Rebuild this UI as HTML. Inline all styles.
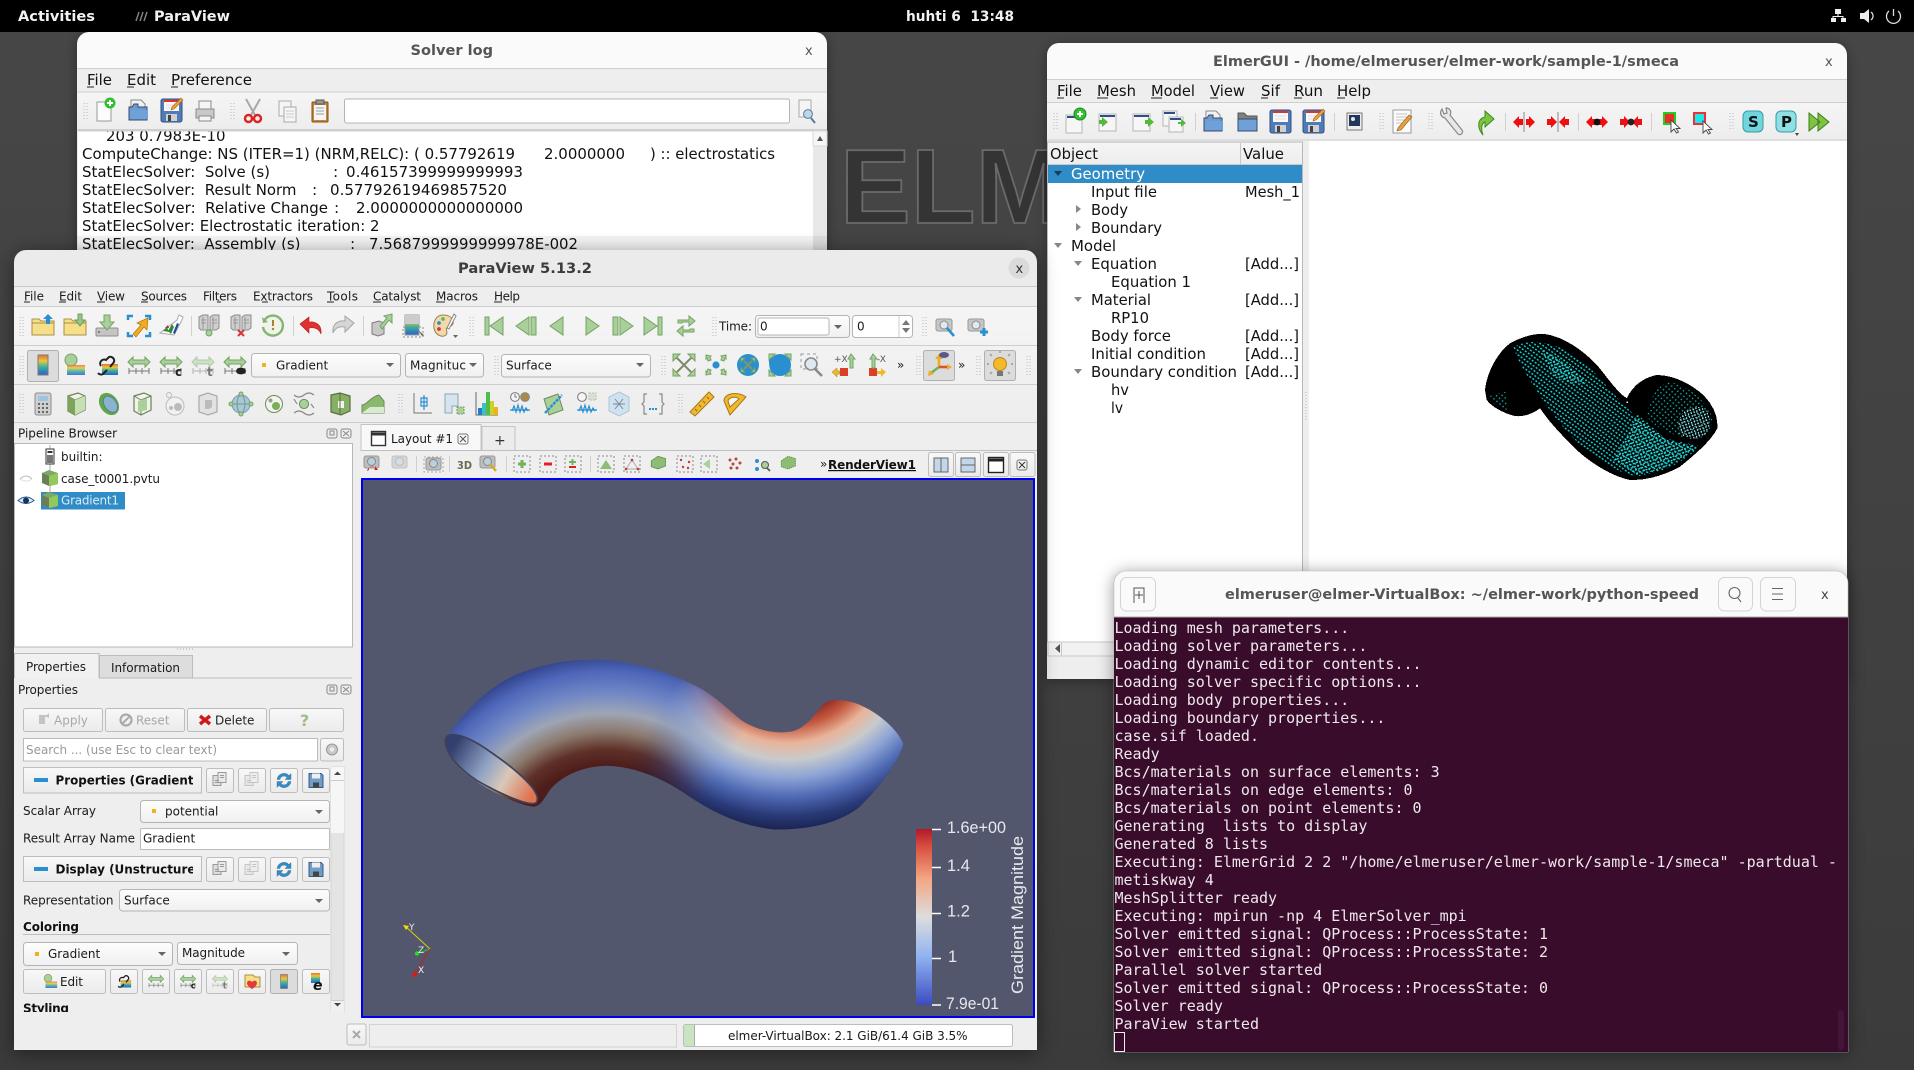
<!DOCTYPE html>
<html lang="en"><head><meta charset="utf-8"><title>Desktop</title>
<style>
html,body{margin:0;padding:0;background:#404040;width:1914px;height:1070px;overflow:hidden}
svg{display:block}
text{font-family:"DejaVu Sans","Liberation Sans",sans-serif;white-space:pre}
.m{font-size:12px;fill:#1a1a1a}
.b{font-size:12px;font-weight:700;fill:#111}
.g{font-size:12px;fill:#a8a8a8}
.l{font-size:15.5px;fill:#111}
.t{font-size:14px;font-weight:700;fill:#555;text-anchor:start}
.top{font-size:14px;font-weight:700;fill:#f2f2f2}
.tm{font-family:"DejaVu Sans Mono","Liberation Mono",monospace;font-size:15px;fill:#eee8ec}
.leg{font-family:"Liberation Sans",sans-serif;font-size:16.5px;fill:#e8e8ec}
.btn{fill:url(#bt);stroke:#bdbdbd}
.cb{fill:url(#cb);stroke:#b4b4b4}
.grip{stroke:#b9b9b9;stroke-dasharray:1 2;fill:none}
.sep{stroke:#d0d0d0;fill:none}
.gi{fill:#a9d09a;stroke:#74a264;stroke-width:1}
.gray{fill:#d4d4d4;stroke:#9b9b9b;stroke-width:1}
</style></head><body>
<svg xmlns="http://www.w3.org/2000/svg" width="1914" height="1070" viewBox="0 0 1914 1070">
<defs>
<linearGradient id="wall" x1="0" y1="0" x2="0" y2="1"><stop offset="0" stop-color="#474747"/><stop offset="1" stop-color="#3b3b3b"/></linearGradient>
<linearGradient id="bt" x1="0" y1="0" x2="0" y2="1"><stop offset="0" stop-color="#f8f8f8"/><stop offset="1" stop-color="#ebebeb"/></linearGradient>
<linearGradient id="cb" x1="0" y1="0" x2="0" y2="1"><stop offset="0" stop-color="#fdfdfd"/><stop offset="1" stop-color="#f0f0f0"/></linearGradient>
<linearGradient id="tb" x1="0" y1="0" x2="0" y2="1"><stop offset="0" stop-color="#f5f5f5"/><stop offset="1" stop-color="#ededed"/></linearGradient>
<linearGradient id="rb" x1="0" y1="0" x2="0" y2="1"><stop offset="0" stop-color="#e8703a"/><stop offset=".3" stop-color="#e8c83a"/><stop offset=".6" stop-color="#3ab0a0"/><stop offset="1" stop-color="#2a60c8"/></linearGradient>
<linearGradient id="legend" x1="0" y1="0" x2="0" y2="1"><stop offset="0" stop-color="#b2182b"/><stop offset=".1" stop-color="#d6503f"/><stop offset=".28" stop-color="#f4a582"/><stop offset=".5" stop-color="#dddddd"/><stop offset=".72" stop-color="#92b4f0"/><stop offset="1" stop-color="#3b4cc0"/></linearGradient>
<radialGradient id="lobeL" gradientUnits="userSpaceOnUse" cx="570" cy="1060" r="490"><stop offset=".46" stop-color="#4e1c1a"/><stop offset=".54" stop-color="#5e3028"/><stop offset=".63" stop-color="#8c7a6e"/><stop offset=".72" stop-color="#9ea5b4"/><stop offset=".82" stop-color="#7188c6"/><stop offset=".93" stop-color="#4d66b8"/><stop offset="1" stop-color="#34468f"/></radialGradient>
<radialGradient id="lobeR" gradientUnits="userSpaceOnUse" cx="985" cy="540" r="450"><stop offset=".33" stop-color="#7a1418"/><stop offset=".44" stop-color="#c4583e"/><stop offset=".53" stop-color="#e8b49a"/><stop offset=".62" stop-color="#c8cacc"/><stop offset=".72" stop-color="#8ba2d4"/><stop offset=".82" stop-color="#4f6ab4"/><stop offset=".92" stop-color="#2a3a78"/><stop offset="1" stop-color="#1a2350"/></radialGradient>
<linearGradient id="fade" gradientUnits="userSpaceOnUse" x1="690" y1="700" x2="860" y2="800"><stop offset="0" stop-color="#000"/><stop offset="1" stop-color="#fff"/></linearGradient>
<mask id="rm" maskUnits="userSpaceOnUse" x="0" y="0" width="1500" height="1300"><rect width="1500" height="1300" fill="url(#fade)"/></mask>
<linearGradient id="mouth" gradientUnits="userSpaceOnUse" x1="215" y1="790" x2="400" y2="900"><stop offset="0" stop-color="#33406f"/><stop offset=".4" stop-color="#8fa2c4"/><stop offset=".66" stop-color="#d8c8b8"/><stop offset="1" stop-color="#e0724f"/></linearGradient>
<clipPath id="tube"><path id="tubeP" d="M197,770C225,725 285,645 370,610C440,582 500,578 550,578C640,582 720,610 790,650C835,680 860,710 885,728C925,752 965,758 1000,750C1035,738 1050,705 1070,685C1085,672 1110,674 1140,682C1190,700 1240,745 1253,782C1245,815 1205,880 1150,935C1100,975 1030,988 960,988C880,982 810,945 745,898C690,860 630,836 570,834C510,835 465,860 440,890C425,910 420,930 400,933C350,925 280,885 235,845C210,820 195,795 197,770Z"/></clipPath>
<pattern id="md" patternUnits="userSpaceOnUse" width="11" height="11" patternTransform="rotate(35)"><rect x="1" y="1" width="6" height="4.500" fill="#10cfd2"/></pattern>
<pattern id="md2" patternUnits="userSpaceOnUse" width="10" height="10" patternTransform="rotate(-20)"><rect x="1" y="1" width="6" height="4" fill="#2fe6e6"/></pattern>
<pattern id="md3" patternUnits="userSpaceOnUse" width="12" height="12" patternTransform="rotate(40)"><rect x="1" y="1" width="4" height="4" fill="#12c4c8"/></pattern>
<pattern id="md4" patternUnits="userSpaceOnUse" width="9" height="9" patternTransform="rotate(70)"><rect x="1" y="1" width="5" height="3.500" fill="#b8f6f6"/></pattern>
<clipPath id="c1"><rect x="20" y="760" width="173" height="40"/></clipPath>
<clipPath id="c2"><rect x="20" y="850" width="173" height="40"/></clipPath>

<g id="fUp"><path d="M-11,-7h7l2,2h13v14h-22z" fill="#f5df88" stroke="#a88f4a"/><path d="M-11,-3h22" stroke="#a88f4a"/><path d="M5,-12l5,5h-3v5h-4v-5h-3z" fill="#2a8fd0"/></g>
<g id="fDn"><path d="M-11,-7h7l2,2h13v14h-22z" fill="#f5df88" stroke="#a88f4a"/><path d="M-11,-3h22" stroke="#a88f4a"/><path d="M3,-12h4v6h3l-5,6-5-6h3z" fill="#96c686" stroke="#6f9c60"/></g>
<g id="sv"><rect x="-11" y="2" width="22" height="8" rx="1" fill="#c4c4c4" stroke="#8e8e8e"/><circle cx="-8" cy="6" r="1" fill="#666"/><path d="M-3,-11h6v7h4l-7,8-7-8h4z" fill="#a9d09a" stroke="#74a264"/></g>
<g id="rc"><path d="M-11,-6v-4h5M6,-10h5v4M11,6v4h-5M-6,10h-5v-4" stroke="#2a8fd0" stroke-width="2.5" fill="none"/><path d="M-6,8L2,-1l-4,-2L9,-8L8,4L5,1L-3,11z" fill="#f2ac1c" stroke="#a8761a" stroke-width=".7"/></g>
<g id="flask"><path d="M-11,7L6,-6L8,-11L12,-9L10,-4L3,9z" fill="#fff" stroke="#aaa"/><path d="M-8,5L-4,1L-2,6zM-3,5L1,-2L3,1L0,8z" fill="#2f8a3a"/><path d="M-6,2l3,-3l1,3z" fill="#c32a2a"/><path d="M2,7L6,-3L8,-2L4,8z" fill="#1d4f9c"/></g>
<g id="srv"><path d="M-10,-9l4,-2h5v15h-7l-2,-2zM1,-9l3,-2h6v13l-3,2h-6z" fill="#cfcfcf" stroke="#8c8c8c"/><path d="M-6,-9v12M4,-9v12M-8,-6h5M-8,-3h5M3,-6h5M3,-3h5" stroke="#8c8c8c" stroke-width=".8"/></g>
<g id="srvC"><use href="#srv"/><circle cx="0" cy="7" r="3" fill="#a9d09a" stroke="#74a264"/></g>
<g id="srvX"><use href="#srv"/><path d="M-3,4l6,6M3,4l-6,6" stroke="#d33" stroke-width="2"/></g>
<g id="clk"><path d="M-9,-5A10,10 0 1 1 -10,1" fill="#eef4e8" stroke="#86b274" stroke-width="2.4"/><path d="M-11,-9l1,6 5,-1z" fill="#86b274"/><path d="M0,-6v6h0" stroke="#a8842e" stroke-width="2"/><circle cx="0" cy="3" r="1.2" fill="#a8842e"/></g>
<g id="und"><path d="M-11,-3L-2,-10v5C6,-6 11,-1 10,7C8,2 4,0 -2,1v5z" fill="#e03030" stroke="#b01818" stroke-width=".6" transform="translate(0,1)"/></g>
<g id="red"><path d="M11,-3L2,-10v5C-6,-6 -11,-1 -10,7C-8,2 -4,0 2,1v5z" fill="#d6d6d6" stroke="#a5a5a5"/></g>
<g id="cba"><path d="M-9,-3l7,-2 5,2v11l-6,2-6,-2z" fill="#c8c8c8" stroke="#7d7d7d"/><path d="M-1,0L6,-8l-3,-2L11,-12V-3L8,-6L1,3z" fill="#a9d09a" stroke="#74a264"/></g>
<g id="cmp"><rect x="-8" y="-11" width="14" height="20" fill="url(#rb)" stroke="#999"/><rect x="-8" y="-11" width="14" height="9" fill="#ccc"/><rect x="-10" y="1" width="20" height="10" fill="none" stroke="#888" stroke-dasharray="2 2"/><path d="M5,4l6,5-2,1z" fill="#666"/></g>
<g id="pal"><path d="M-2,-11C-9,-11 -12,-4 -11,2C-10,9 -3,12 1,9C4,6 -1,3 3,1C7,0 9,-2 8,-5C7,-9 3,-11 -2,-11Z" fill="#f1d9ab" stroke="#9b7e4c"/><circle cx="-6" cy="-3" r="1.9" fill="#2a8fd0"/><circle cx="-2" cy="-7" r="1.9" fill="#6cb35a"/><circle cx="-6" cy="3" r="1.9" fill="#d33"/><path d="M9,-12L2,2l2,1L11,-10z" fill="#fff" stroke="#888"/></g>
<g id="v1"><path d="M-9,-9h4v18h-4z" class="gi"/><path d="M9,-9v18L-4,0z" class="gi"/></g>
<g id="v2"><path d="M-11,0L2,-9v18z" class="gi"/><path d="M4,-9h5v18h-5z" class="gi"/></g>
<g id="v3"><path d="M6,-9v18L-7,0z" class="gi"/></g>
<g id="v4"><path d="M-6,-9v18L7,0z" class="gi"/></g>
<g id="v5"><path d="M11,0L-2,-9v18z" class="gi"/><path d="M-9,-9h5v18h-5z" class="gi"/></g>
<g id="v6"><path d="M9,-9h-4v18h4z" class="gi"/><path d="M-9,-9v18L4,0z" class="gi"/></g>
<g id="lp"><path d="M-8,-3v-3h11v-4l6,5-6,5V-4h-7v1zM8,3v3h-11v4l-6,-5 6,-5v4h7v-1z" class="gi"/></g>
<g id="cam"><rect x="-9" y="-7" width="16" height="12" rx="2" fill="#c6c6c6" stroke="#999"/><circle cx="-1" cy="-1" r="4" fill="#dfe9f2" stroke="#8a8a8a"/></g>
<g id="camS"><use href="#cam"/><path d="M2,2l7,8" stroke="#2a8fd0" stroke-width="2.6"/></g>
<g id="camP"><use href="#cam"/><path d="M3,6h8M7,2v8" stroke="#2a8fd0" stroke-width="3"/></g>
<g id="cbar"><rect x="-5" y="-10" width="10" height="20" fill="url(#rb)" stroke="#7a7a7a"/></g>
<g id="ball"><circle cx="-3" cy="-5" r="6" fill="#a9d09a" stroke="#74a264"/><rect x="-7" y="0" width="18" height="10" fill="url(#rb)" opacity=".85"/></g>
<g id="chain"><rect x="-5" y="-1" width="16" height="11" fill="url(#rb)"/><path d="M-6,1a4,4 0 0 1 5,-6l3,-3a4,4 0 0 1 5,5l-4,5M-9,8a4,4 0 0 0 5,1l4,-4" stroke="#222" stroke-width="2" fill="none"/></g>
<g id="ar"><path d="M-11,-3l5,-5v3h12v-3l5,5-5,5v-3h-12v3z" class="gi"/><path d="M-10,6h20M-10,3v6M-3,3v6M3,3v6M10,3v6" stroke="#777" fill="none"/></g>
<g id="arC"><use href="#ar"/><text x="4" y="11" style="font-size:12px;font-weight:700;fill:#222">c</text></g>
<g id="arT"><g opacity=".5"><use href="#ar"/></g><text x="4" y="11" style="font-size:12px;font-weight:700;fill:#777">t</text></g>
<g id="arE"><use href="#ar"/><ellipse cx="6" cy="6" rx="5" ry="3.4" fill="#222"/></g>
<g id="xp"><path d="M-9,-9L9,9M9,-9L-9,9" stroke="#7f8a6a" stroke-width="2"/><path d="M-11,-11h7l-7,7zM11,-11h-7l7,7zM-11,11h7l-7,-7zM11,11h-7l7,-7z" class="gi"/></g>
<g id="xpI"><circle r="3.6" fill="#2a8fd0"/><path d="M-10,-10l5,1-1,1 1,3-3,1-1,-3-1,1zM10,-10l-5,1 1,1-1,3 3,1 1,-3 1,1zM-10,10l5,-1-1,-1 1,-3-3,-1-1,3-1,-1zM10,10l-5,-1 1,-1-1,-3 3,-1 1,3 1,-1z" class="gi"/></g>
<g id="xc"><circle r="11" fill="#2a8fd0"/><path d="M-4,-4L4,4M4,-4L-4,4" stroke="#7a9a6a" stroke-width="2"/><path d="M-7,-7h4l-4,4zM7,-7h-4l4,4zM-7,7h4l-4,-4zM7,7h-4l4,-4z" class="gi"/></g>
<g id="xb"><path d="M-11,-4Q-11,-6 -7,-8Q-5,-11 0,-11Q5,-11 7,-8Q11,-6 11,0Q11,6 7,8Q5,11 0,11Q-5,11 -7,8Q-11,6 -11,-4Z" fill="#2a8fd0"/><path d="M-11,-11h6l-6,6zM11,-11h-6l6,6zM-11,11h6l-6,-6zM11,11h-6l6,-6z" class="gi"/></g>
<g id="xm"><rect x="-11" y="-11" width="16" height="15" fill="none" stroke="#999" stroke-dasharray="3 3"/><circle cx="-1" cy="-1" r="6" fill="#dfe9f2" stroke="#8a8a8a" stroke-width="1.6"/><path d="M3,4l7,7" stroke="#8a8a8a" stroke-width="2.6"/></g>
<g id="pX"><rect x="-3" y="3" width="8" height="8" fill="#d8402a"/><path d="M-11,7l5,-4v3h3v3h-3v3z" fill="#f0b92c" stroke="#a8761a" stroke-width=".5"/><path d="M8,-11l-3,5h2v9h3v-9h2z" class="gi"/></g>
<g id="mX"><rect x="-7" y="3" width="8" height="8" fill="#d8402a"/><path d="M10,7l-5,-4v3H1v3h4v3z" fill="#f0b92c"/><path d="M-3,-11l-3,5h2v9h3v-9h2z" class="gi"/></g>
<g id="axisV"><path d="M-8,8L0,2" stroke="#6cb35a" stroke-width="2.6"/><path d="M0,2v-8" stroke="#e8b020" stroke-width="2.6"/><path d="M0,2h9" stroke="#e05030" stroke-width="2.6"/><path d="M-4,-6l4,-5 4,5zM8,-1l5,3-5,3zM-11,11l1,-6 5,4z" fill="#e8b020"/><ellipse cx="5" cy="-10" rx="5" ry="3" fill="#5a5a8a"/></g>
<g id="bulb"><circle cy="-3" r="6.5" fill="#f4b82a" stroke="#b98b1a"/><rect x="-3" y="4" width="6" height="5" fill="#777"/><path d="M-11,-3h-2M11,-3h2M-8,-11l-2,-2M8,-11l2,-2M0,-14v-2M-8,5l-2,2M8,5l2,2" stroke="#999" stroke-width="1.4" fill="none"/></g>
<g id="calc"><rect x="-8" y="-11" width="16" height="22" rx="2" fill="#cfcfcf" stroke="#8c8c8c"/><rect x="-5" y="-8" width="10" height="5" fill="#9dc4e0"/><path d="M-5,0h2M-1,0h2M3,0h2M-5,4h2M-1,4h2M3,4h2M-5,8h2M-1,8h2M3,8h2" stroke="#555" stroke-width="1.8"/></g>
<g id="cub"><path d="M-8,-8L2,-11L9,-8V6L-1,11L-8,7Z" fill="#eff3ea" stroke="#6d7f5a" stroke-width="1.2"/><path d="M-8,-8L-1,-4L9,-8M-1,-4V11" fill="none" stroke="#6d7f5a"/></g>
<g id="cubG"><use href="#cub"/><path d="M-8,-8L-1,-4V11L-8,7Z" fill="#7da55a"/><path d="M-1,-4L9,-8V6L-1,11Z" fill="#c4e0b4"/></g>
<g id="dis"><ellipse rx="9" ry="12" transform="rotate(-35)" fill="#5fa845"/><ellipse rx="6" ry="9" transform="rotate(-35) translate(1,1)" fill="#8ab4cc" stroke="#5a7a9a"/></g>
<g id="cubW"><use href="#cub"/><path d="M-4,-3L5,-6V6L-4,8z" fill="#a9d09a"/></g>
<g id="cir"><circle cx="-6" cy="-9" r="2.5" fill="none" stroke="#bbb"/><circle cx="0" cy="2" r="9" fill="#f1f1f1" stroke="#bbb"/><circle cx="3" cy="3" r="4" fill="#bbb"/><circle cx="-4" cy="4" r="2" fill="#bbb"/></g>
<g id="cubGy"><path d="M-9,-8L0,-11L9,-8V8L0,11L-9,8Z" fill="#e2e2e2" stroke="#aaa" stroke-width="1.2"/><path d="M-3,-4h7v7l-3,2h-4z" fill="#bbb"/></g>
<g id="orb"><circle r="9" fill="#a5c8e0" stroke="#7aa4b8" stroke-width="1.2"/><ellipse rx="4" ry="9" fill="none" stroke="#7a9a6a"/><path d="M-9,0h18" stroke="#7a9a6a"/><circle cy="-10" r="2" class="gi"/><circle cy="10" r="2" class="gi"/><circle cx="-10" r="2" class="gi"/><circle cx="10" r="2" class="gi"/></g>
<g id="cel"><circle r="8.5" fill="#f2f5ee" stroke="#6f8a5a"/><circle cx="2" cy="2" r="4" fill="#7cae5a"/><circle cx="-3.5" cy="-3.5" r="2" fill="#9a9a9a"/></g>
<g id="str"><circle r="4.6" fill="#a9d09a" stroke="#6f8a5a"/><path d="M-10,-9q5,4 10,0t10,0M-10,9q5,-4 10,0t10,0M-10,-5q3,5 3,5M10,4q-3,-4 -3,-4" fill="none" stroke="#8a8a8a" stroke-width="1.2"/></g>
<g id="cbG"><path d="M-9,-9L0,-11L10,-8V7L1,11L-9,8Z" fill="#88b064" stroke="#5a6f42" stroke-width="1.2"/><path d="M-2,-3h6v7h-6z" fill="#f3f3f3"/><path d="M0,-11V11" stroke="#5a6f42"/></g>
<g id="ext"><path d="M-11,9V1C-6,1 -3,-7 6,-9L11,-3V9Z" fill="#8ab86c" stroke="#6f8a5a"/><path d="M-11,9H11V3L-3,3z" fill="#d9ead0"/></g>
<g id="pl1"><path d="M-8,-11V9H10" fill="none" stroke="#777"/><path d="M2,-9V6M-1,-6h6v8h-6zM-1,-2h6" fill="none" stroke="#2a8fd0" stroke-width="1.2"/></g>
<g id="pl2"><path d="M-10,-10h13v12h-6v7h-7z" fill="#d6e4f0" stroke="#8aa"/><rect x="2" y="3" width="7" height="7" fill="#a9d09a" stroke="#7a9a6a" stroke-dasharray="2 1"/></g>
<g id="hist"><path d="M-11,-12V11H11" fill="none" stroke="#666"/><rect x="-9" y="4" width="4" height="7" fill="#1f7dcc"/><rect x="-5" y="-1" width="4" height="12" fill="#3fbfc0"/><rect x="-1" y="-12" width="4" height="23" fill="#4fbd4a"/><rect x="3" y="-3" width="4" height="14" fill="#cfd02a"/><rect x="7" y="3" width="4" height="8" fill="#f2b01c"/></g>
<g id="tg"><circle cx="-5" cy="-7" r="4.4" fill="#f5f5f5" stroke="#777"/><path d="M-5,-10v3h2" stroke="#777" fill="none"/><circle cx="5" cy="-7" r="4.4" fill="#a88b48" stroke="#888"/><path d="M-10,6H10M-8,7l2,-5 2,6 2,-7 2,7 2,-6 2,6 2,-4 2,3" fill="none" stroke="#2a8fd0" stroke-width="1.2"/></g>
<g id="plo"><path d="M-9,-5L5,-10L10,6L-4,11z" fill="#a9d09a" stroke="#6f8a5a"/><path d="M-8,9L9,-9" stroke="#2a8fd0" stroke-width="2.4" stroke-dasharray="3 1"/></g>
<g id="tg2"><circle cx="-5" cy="-7" r="4.4" fill="#f5f5f5" stroke="#777"/><rect x="2" y="-11" width="7" height="7" fill="#ddd" stroke="#a9d09a" stroke-dasharray="2 1"/><path d="M-10,6H10M-8,7l2,-5 2,6 2,-7 2,7 2,-6 2,6 2,-4 2,3" fill="none" stroke="#2a8fd0" stroke-width="1.2"/></g>
<g id="cry"><path d="M0,-12L10,-7V7L0,12L-10,7V-7Z" fill="#cfe2f0" stroke="#b0c4d4"/><path d="M-6,0H6M-4,-5L4,5M4,-5L-4,5" stroke="#7a8a9a"/></g>
<g id="brc"><path d="M-6,-10h-3v8l-2,2 2,2v8h3M6,-10h3v8l2,2-2,2v8h-3" fill="none" stroke="#888" stroke-width="1.2"/><path d="M-4,5h2M-1,5h2M2,5h2" stroke="#2a8fd0" stroke-width="2"/></g>
<g id="rul"><path d="M-12,8L7,-12L12,-7L-7,12Z" fill="#f0b92c" stroke="#a8761a"/><path d="M-7,5l2,2M-3,1l2,2M1,-3l2,2M5,-7l2,2" stroke="#8a6016"/></g>
<g id="pro"><path d="M-5,11L-11,-3C-11,-11 3,-13 11,-7z" fill="#f0b92c" stroke="#a8761a"/><path d="M-5,3L-7,-3C-6,-7 1,-8 4,-5z" fill="#f4f4f4" stroke="#a8761a"/></g>
<g id="eye"><path d="M-8,0Q0,-7 8,0Q0,6 -8,0Z" fill="#dcecf8" stroke="#2c5a92"/><circle r="3" fill="#14325c"/></g>
<g id="eyeO"><path d="M-6,0Q0,-6 6,0" fill="none" stroke="#bbb"/><path d="M-6,0q6,4 12,0" fill="none" stroke="#bbb" stroke-dasharray="1 1"/></g>
<g id="cube"><path d="M-8,-5L-1,-8L8,-5V6L0,8L-8,5Z" fill="#7ea868"/><path d="M-8,-5L-1,-2V8L-8,5Z" fill="#6a7f55"/><path d="M-1,-2L8,-5V6L-1,8Z" fill="#93c95c"/></g>
<g id="ccam"><path d="M-9,-6h18M-9,-6" fill="none"/><rect x="-8" y="-7" width="15" height="12" rx="2" fill="#bdbdbd" stroke="#999"/><circle cx="-.5" cy="-1.5" r="4" fill="#b8cfe0" stroke="#888"/></g>
<g id="sel"><rect x="-8" y="-8" width="16" height="16" fill="none" stroke="#888" stroke-dasharray="2 2"/></g>
<g id="cp"><path d="M-7,-5h8v10h-8z" fill="#dedede" stroke="#9a9a9a"/><path d="M-2,-8h8v10h-8z" fill="#e9e9e9" stroke="#9a9a9a"/><path d="M-5,0h4M-5,2h4M0,-5h4M0,-3h4" stroke="#9a9a9a"/></g>
<g id="rf"><path d="M-7,-1a7,7 0 0 1 12,-4l2,-2v6h-6l2,-2a4,4 0 0 0 -7,2zM7,1a7,7 0 0 1 -12,4l-2,2v-6h6l-2,2a4,4 0 0 0 7,-2z" fill="#2a8fd0" stroke="#666" stroke-width=".4"/></g>
<g id="fl"><path d="M-7,-7h12l2,2v12h-14z" fill="#6f9cc8" stroke="#3a5a80"/><rect x="-4" y="-7" width="8" height="5" fill="#eee"/><rect x="-3" y="2" width="6" height="5" fill="#444"/></g>
<g id="ed"><rect x="-10" y="-10" width="20" height="20" fill="#fdfdfd" stroke="#c8c8c8"/><rect x="-10" y="-10" width="16" height="3" fill="#2c4f8c"/></g>
<g id="gnew"><rect x="-10" y="-7" width="16" height="18" fill="#f6f6f6" stroke="#b5b5b5"/><path d="M-9,-5h14" stroke="#2c4f8c" stroke-width="2"/><circle cx="4" cy="-8" r="6" fill="#30c030" stroke="#1e8a1e"/><path d="M1,-8h6M4,-11v6" stroke="#fff" stroke-width="2"/></g>
<g id="gop"><rect x="-9" y="-8" width="17" height="17" fill="#f6f6f6" stroke="#b5b5b5"/><path d="M-8,-6h15" stroke="#2c4f8c" stroke-width="2"/><path d="M-9,-2h3v-3l6,5-6,5v-3h-3z" fill="#54b83a"/></g>
<g id="gex"><rect x="-9" y="-8" width="17" height="17" fill="#f6f6f6" stroke="#b5b5b5"/><path d="M-8,-6h15" stroke="#2c4f8c" stroke-width="2"/><path d="M3,-2h3v-3l6,5-6,5v-3h-3z" fill="#54b83a"/></g>
<g id="gmu"><rect x="-11" y="-11" width="14" height="15" fill="#f6f6f6" stroke="#b5b5b5"/><rect x="-5" y="-5" width="14" height="15" fill="#f6f6f6" stroke="#b5b5b5"/><path d="M-10,-9h11M-4,-3h11" stroke="#2c4f8c" stroke-width="2"/><path d="M4,0h3v-3l5,4-5,4v-3h-3z" fill="#54b83a"/></g>
<g id="bop"><path d="M-8,-11h10l4,4v8h-14z" fill="#f2f2f2" stroke="#888"/><path d="M-10,-4h3l2,-3h4v3h9v13h-18z" fill="#6c9bd2" stroke="#3a4a6a"/><rect x="-9" y="-1" width="18" height="9" fill="#6fa1d8"/></g>
<g id="bfo"><path d="M-10,-9h6l3,3h10v4h-19z" fill="#808080" stroke="#555"/><rect x="-10" y="-3" width="19" height="12" fill="#6fa1d8" stroke="#3a4a6a"/></g>
<g id="bsv"><rect x="-11" y="-12" width="21" height="23" rx="2" fill="#4f7cb8" stroke="#34507c"/><rect x="-8" y="-11" width="15" height="11" fill="#fafafa"/><path d="M-8,-10h15" stroke="#d33" stroke-width="2"/><path d="M-6,-6h11M-6,-3h11" stroke="#ddd"/><rect x="-6" y="3" width="11" height="7" fill="#d0d0d0"/><rect x="-4" y="4" width="3" height="6" fill="#444"/></g>
<g id="bsa"><use href="#bsv"/><path d="M0,-4L9,-13l2,2L2,-2l-3,1z" fill="#e8a23a" stroke="#a8641a" stroke-width=".6"/></g>
<g id="gimg"><rect x="-7" y="-9" width="15" height="17" fill="#eee" stroke="#777"/><rect x="-5" y="-7" width="11" height="11" fill="#24365a"/><circle cx="-1" cy="-3" r="2" fill="#e3e8ee"/></g>
<g id="pen"><rect x="-9" y="-12" width="18" height="23" fill="#fcfcfc" stroke="#9a9a9a"/><path d="M-6,-8h11M-6,-5h11M-6,-2h11M-6,1h8" stroke="#c4c4c4"/><path d="M-4,6L7,-7l3,2L-1,8l-4,1z" fill="#e8a23a" stroke="#8a5a1a" stroke-width=".6"/></g>
<g id="wr"><path d="M-9,-13C-12,-9 -10,-5 -6,-4L7,12C9,14 13,11 11,8L-1,-7C1,-10 -1,-14 -5,-14L-4,-9L-7,-8Z" fill="#e8e8e8" stroke="#888" stroke-width="1.200"/></g>
<g id="gar"><path d="M-3,13C-9,6 -9,-3 -1,-5V-11L8,-3 -1,5V0C-5,1 -5,8 -3,13Z" fill="#7cc442" stroke="#3e8a18"/></g>
<g id="rA1"><path d="M-11,0l6,-6v3h4v6h-4v3zM11,0l-6,-6v3h-3v6h3v3z" fill="#ee1010"/><path d="M0,-10V10" stroke="#888"/></g>
<g id="rA2"><path d="M-1,0l-6,-6v3h-4v6h4v3zM1,0l6,-6v3h4v6h-4v3z" fill="#ee1010"/><path d="M0,-10V10" stroke="#888"/></g>
<g id="rA3"><path d="M-11,0l6,-6v3h10v-3l6,6-6,6v-3h-10v3z" fill="#ee1010"/><circle r="3.4" fill="#111"/></g>
<g id="rA4"><path d="M-1,0l-6,-6v3h-4v6h4v3zM1,0l6,-6v3h4v6h-4v3z" fill="#ee1010"/><circle r="3.4" fill="#222"/></g>
<g id="cur"><path d="M0,0V12L3,9 5.5,13 7.5,12 5,8.5h4Z" fill="#fff" stroke="#444" stroke-width=".9"/></g>
<g id="sq1"><rect x="-6" y="-9" width="11" height="11" fill="#ee2a2a" stroke="#20d020" stroke-width="2"/><use href="#cur" x="1" y="-2"/></g>
<g id="sq2"><rect x="-6" y="-9" width="11" height="11" fill="#1ae8f0" stroke="#ee3030" stroke-width="2"/><use href="#cur" x="3" y="-1"/></g>
<g id="bS"><rect x="-10" y="-11" width="20" height="21" rx="5" fill="#6fd6de" stroke="#3a9aa2"/><text x="-5" y="5" style="font-size:15px;font-weight:700;fill:#111">S</text></g>
<g id="bP"><rect x="-10" y="-11" width="20" height="21" rx="5" fill="#8fe0e4" stroke="#3a9aa2"/><text x="-5" y="5" style="font-size:15px;font-weight:700;fill:#111">P</text><path d="M9,11h4l-2,3z" fill="#444"/></g>
<g id="ff"><path d="M-10,-9L1,0L-10,9z M-1,-9L10,0L-1,9z" fill="#7cc442" stroke="#3e7a1a"/></g>
<g id="snew"><path d="M-9,-9h14v19h-14z" fill="#fcfcfc" stroke="#999"/><circle cx="4" cy="-8" r="5.5" fill="#2fc02f"/><path d="M1,-8h6M4,-11v6" stroke="#fff" stroke-width="2"/></g>
<g id="scis"><path d="M-7,-12L2,4M7,-12L-2,4" stroke="#a8a8a8" stroke-width="2"/><circle cx="-4.5" cy="7.5" r="3.5" fill="none" stroke="#d22" stroke-width="2.4"/><circle cx="4.5" cy="7.5" r="3.5" fill="none" stroke="#d22" stroke-width="2.4"/></g>
<g id="scop"><rect x="-8" y="-10" width="12" height="15" fill="#f5f5f5" stroke="#aaa"/><rect x="-3" y="-4" width="12" height="15" fill="#f5f5f5" stroke="#aaa"/><path d="M-1,0h8M-1,3h8M-1,6h8" stroke="#ccc"/></g>
<g id="spas"><rect x="-8" y="-9" width="16" height="20" rx="1" fill="#c9853a" stroke="#7c4e1a"/><rect x="-6" y="-6" width="12" height="15" fill="#f6f6f6"/><rect x="-4" y="-11" width="8" height="4" fill="#999" stroke="#555"/><path d="M-4,-3h8M-4,0h8M-4,3h8" stroke="#999"/></g>
<g id="spri"><path d="M-9,-2h18v9h-18z" fill="#c8c8c8" stroke="#8a8a8a"/><rect x="-6" y="-10" width="12" height="8" fill="#f5f5f5" stroke="#8a8a8a"/><rect x="-6" y="5" width="12" height="5" fill="#f5f5f5" stroke="#8a8a8a"/></g>
<g id="ssea"><rect x="-8" y="-11" width="12" height="17" fill="#f5f5f5" stroke="#aaa"/><circle cx="1" cy="3" r="4.4" fill="#bcd6ea" stroke="#5a7a9a"/><path d="M4,7l4,5" stroke="#5a7a9a" stroke-width="2"/></g>
</defs>

<!-- wallpaper -->
<rect x="0" y="0" width="1914" height="1070" fill="url(#wall)"/>
<text x="840" y="223" style="font-family:'Liberation Sans',sans-serif;font-size:106px;font-weight:700;fill:#343434;stroke:#6a6a6a;stroke-width:1.800">ELME</text>
<rect x="0" y="0" width="1914" height="32" fill="#000"/>
<text class="top" x="18" y="21" textLength="77" lengthAdjust="spacingAndGlyphs">Activities</text>
<path d="M136,21l3,-9M140,21l3,-9M144,21l3,-9" stroke="#888" stroke-width="1.4"/>
<text class="top" x="154" y="21" textLength="76" lengthAdjust="spacingAndGlyphs">ParaView</text>
<text class="top" x="906" y="21" textLength="108" lengthAdjust="spacingAndGlyphs">huhti 6  13:48</text>
<g fill="#eee" stroke="none"><rect x="1835" y="9" width="6" height="5"/><rect x="1831" y="18" width="5" height="4"/><rect x="1841" y="18" width="5" height="4"/><path d="M1837.5,14h1v2h5v2h-1v-1h-9v1h-1v-2h5z"/>
<path d="M1860,13h4l5,-4v14l-5,-4h-4z"/></g>
<path d="M1871,12a5,5 0 0 1 0,8" stroke="#ddd" stroke-width="1.3" fill="none"/>
<path d="M1889,11a7,7 0 1 0 9,0M1893.5,9v7" stroke="#ddd" stroke-width="1.3" fill="none"/>

<!-- SOLVER LOG -->
<g style="filter:drop-shadow(0 2px 6px rgba(0,0,0,.35))">
<path d="M89,32H815a12,12 0 0 1 12,12V260H77V44a12,12 0 0 1 12,-12Z" fill="#fafafa"/>
</g>
<rect x="77" y="68" width="750" height="192" fill="#eeeeee"/>
<path d="M77,68.5H827" stroke="#cfcfcf"/>
<text x="410.5" y="55" textLength="82.5" lengthAdjust="spacingAndGlyphs" class="t">Solver log</text>
<text x="805" y="55" style="font-size:13px;fill:#555">x</text>
<text class="l" x="87" y="85" textLength="25" lengthAdjust="spacingAndGlyphs">File</text><text class="l" x="127" y="85" textLength="29" lengthAdjust="spacingAndGlyphs">Edit</text><text class="l" x="171" y="85" textLength="81" lengthAdjust="spacingAndGlyphs">Preference</text>
<path d="M87,87h7M127,87h7M171,87h7" stroke="#222"/>
<rect x="77" y="92" width="750" height="38" fill="url(#tb)"/><path d="M77,92H827M77,129.5H827" stroke="#cfcfcf"/>
<path class="grip" d="M84,103V119M87,103V119M231,103V119M234,103V119"/>
<use href="#snew" x="106" y="111"/><use href="#bop" x="139" y="111"/><use href="#bsa" x="172" y="111"/><use href="#spri" x="205" y="111"/><use href="#scis" x="253" y="111"/><use href="#scop" x="287" y="111"/><use href="#spas" x="320" y="111"/><use href="#ssea" x="807" y="111"/>
<rect x="344.500" y="99" width="445" height="24" rx="2" fill="#fff" stroke="#b4b4b4"/>
<rect x="78" y="131" width="749" height="129" fill="#fff"/>
<text class="l" x="106" y="141" textLength="119.500" lengthAdjust="spacingAndGlyphs">203 0.7983E-10</text>
<rect x="78" y="130" width="749" height="1.500" fill="#cfcfcf"/>
<g class="l">
<text class="l" x="82" y="159" textLength="433" lengthAdjust="spacingAndGlyphs">ComputeChange: NS (ITER=1) (NRM,RELC): ( 0.57792619</text><text class="l" x="544" y="159" textLength="81" lengthAdjust="spacingAndGlyphs">2.0000000</text><text class="l" x="650" y="159" textLength="125" lengthAdjust="spacingAndGlyphs">) :: electrostatics</text>
<text class="l" x="82" y="177" textLength="188" lengthAdjust="spacingAndGlyphs">StatElecSolver:  Solve (s)</text><text class="l" x="333" y="177">:</text><text class="l" x="346" y="177" textLength="177" lengthAdjust="spacingAndGlyphs">0.46157399999999993</text>
<text class="l" x="82" y="195" textLength="214.500" lengthAdjust="spacingAndGlyphs">StatElecSolver:  Result Norm</text><text class="l" x="312" y="195">:</text><text class="l" x="330" y="195" textLength="177" lengthAdjust="spacingAndGlyphs">0.57792619469857520</text>
<text class="l" x="82" y="213" textLength="246" lengthAdjust="spacingAndGlyphs">StatElecSolver:  Relative Change</text><text class="l" x="334" y="213">:</text><text class="l" x="356" y="213" textLength="167" lengthAdjust="spacingAndGlyphs">2.0000000000000000</text>
<text class="l" x="82" y="231" textLength="297.500" lengthAdjust="spacingAndGlyphs">StatElecSolver: Electrostatic iteration: 2</text>
<text class="l" x="82" y="249" textLength="218.500" lengthAdjust="spacingAndGlyphs">StatElecSolver:  Assembly (s)</text><text class="l" x="350" y="249">:</text><text class="l" x="369" y="249" textLength="209" lengthAdjust="spacingAndGlyphs">7.5687999999999978E-002</text>
</g>
<rect x="813" y="131" width="14" height="129" fill="#e8e8e8"/><rect x="813" y="131" width="14" height="15" fill="#f6f6f6" stroke="#d8d8d8"/><path d="M817,141l3,-5 3,5z" fill="#555"/>

<!-- ELMERGUI -->
<g style="filter:drop-shadow(0 2px 6px rgba(0,0,0,.35))">
<path d="M1059,43H1835a12,12 0 0 1 12,12V679H1047V55a12,12 0 0 1 12,-12Z" fill="#fafafa"/>
</g>
<rect x="1047" y="79" width="800" height="600" fill="#eeeeee"/>
<path d="M1047,79.500H1847" stroke="#cfcfcf"/>
<text class="t" x="1213" y="66" textLength="466" lengthAdjust="spacingAndGlyphs">ElmerGUI - /home/elmeruser/elmer-work/sample-1/smeca</text>
<text x="1825" y="66" style="font-size:13px;fill:#555">x</text>
<text class="l" x="1057" y="96" textLength="25" lengthAdjust="spacingAndGlyphs">File</text><text class="l" x="1097" y="96" textLength="39" lengthAdjust="spacingAndGlyphs">Mesh</text><text class="l" x="1151" y="96" textLength="44" lengthAdjust="spacingAndGlyphs">Model</text><text class="l" x="1210" y="96" textLength="35" lengthAdjust="spacingAndGlyphs">View</text><text class="l" x="1261" y="96" textLength="19" lengthAdjust="spacingAndGlyphs">Sif</text><text class="l" x="1294" y="96" textLength="29" lengthAdjust="spacingAndGlyphs">Run</text><text class="l" x="1337" y="96" textLength="34" lengthAdjust="spacingAndGlyphs">Help</text>
<path d="M1057,98h7M1097,98h11M1151,98h11M1210,98h8M1261,98h7M1294,98h8M1337,98h8" stroke="#222"/>
<rect x="1047" y="102" width="800" height="38" fill="url(#tb)"/><path d="M1047,102.500H1847M1047,140H1847" stroke="#cfcfcf"/>
<path class="grip" d="M1054,113V131M1057,113V131M1380,113V131M1383,113V131M1429,113V131M1432,113V131M1730,113V131M1733,113V131"/>
<path class="sep" d="M1195.500,113V131M1334.500,113V131M1505.500,113V131M1578.500,113V131M1651.500,113V131"/>
<use href="#gnew" x="1076" y="122"/><use href="#gop" x="1108" y="122"/><use href="#gex" x="1142" y="122"/><use href="#gmu" x="1174" y="122"/><use href="#bop" x="1214" y="122"/><use href="#bfo" x="1248" y="122"/><use href="#bsv" x="1281" y="122"/><use href="#bsa" x="1314" y="122"/><use href="#gimg" x="1354" y="122"/><use href="#pen" x="1402" y="122"/><use href="#wr" x="1451" y="122"/><use href="#gar" x="1486" y="122"/><use href="#rA1" x="1524" y="122"/><use href="#rA2" x="1558" y="122"/><use href="#rA3" x="1597" y="122"/><use href="#rA4" x="1631" y="122"/><use href="#sq1" x="1670" y="122"/><use href="#sq2" x="1700" y="122"/><use href="#bS" x="1753" y="122"/><use href="#bP" x="1786" y="122"/><use href="#ff" x="1819" y="122"/>
<rect x="1047.500" y="142" width="255" height="500" fill="#fff" stroke="#b8b8b8"/>
<rect x="1048" y="142.500" width="254" height="22" fill="url(#tb)"/><path d="M1048,164.500H1302M1240.500,143V164" stroke="#c8c8c8"/>
<text class="l" x="1050" y="159" textLength="48" lengthAdjust="spacingAndGlyphs">Object</text><text class="l" x="1243" y="159" textLength="41" lengthAdjust="spacingAndGlyphs">Value</text>
<rect x="1048" y="165" width="254" height="18" fill="#308cc6"/>
<text class="l" x="1071" y="179" textLength="74" lengthAdjust="spacingAndGlyphs" style="fill:#fff">Geometry</text>
<path d="M1054,171h8l-4,5z" fill="#153f5f"/>
<text class="l" x="1091" y="197" textLength="66" lengthAdjust="spacingAndGlyphs">Input file</text><text class="l" x="1245" y="197" textLength="55" lengthAdjust="spacingAndGlyphs">Mesh_1</text>
<text class="l" x="1091" y="215" textLength="37" lengthAdjust="spacingAndGlyphs">Body</text>
<text class="l" x="1091" y="233" textLength="71" lengthAdjust="spacingAndGlyphs">Boundary</text>
<text class="l" x="1071" y="251" textLength="45" lengthAdjust="spacingAndGlyphs">Model</text>
<text class="l" x="1091" y="269" textLength="66" lengthAdjust="spacingAndGlyphs">Equation</text><text class="l" x="1245" y="269" textLength="54" lengthAdjust="spacingAndGlyphs">[Add...]</text>
<text class="l" x="1111" y="287" textLength="80" lengthAdjust="spacingAndGlyphs">Equation 1</text>
<text class="l" x="1091" y="305" textLength="60" lengthAdjust="spacingAndGlyphs">Material</text><text class="l" x="1245" y="305" textLength="54" lengthAdjust="spacingAndGlyphs">[Add...]</text>
<text class="l" x="1111" y="323" textLength="38" lengthAdjust="spacingAndGlyphs">RP10</text>
<text class="l" x="1091" y="341" textLength="80" lengthAdjust="spacingAndGlyphs">Body force</text><text class="l" x="1245" y="341" textLength="54" lengthAdjust="spacingAndGlyphs">[Add...]</text>
<text class="l" x="1091" y="359" textLength="115" lengthAdjust="spacingAndGlyphs">Initial condition</text><text class="l" x="1245" y="359" textLength="54" lengthAdjust="spacingAndGlyphs">[Add...]</text>
<text class="l" x="1091" y="377" textLength="146" lengthAdjust="spacingAndGlyphs">Boundary condition</text><text class="l" x="1245" y="377" textLength="54" lengthAdjust="spacingAndGlyphs">[Add...]</text>
<text class="l" x="1111" y="395" textLength="18" lengthAdjust="spacingAndGlyphs">hv</text>
<text class="l" x="1111" y="413" textLength="12" lengthAdjust="spacingAndGlyphs">lv</text>
<path d="M1076,205l5,4-5,4zM1076,223l5,4-5,4z" fill="#888"/>
<path d="M1054,243h8l-4,5zM1074,261h8l-4,5zM1074,297h8l-4,5zM1074,369h8l-4,5z" fill="#888"/>
<rect x="1048" y="642" width="254" height="14" fill="#f2f2f2" stroke="#c8c8c8"/><path d="M1060,644v9l-5,-4.500z" fill="#555"/><path d="M1061.500,642v14" stroke="#c8c8c8"/>
<rect x="1309" y="141" width="538" height="440" fill="#fff"/>
<path class="grip" d="M1306,392V420"/>
<g transform="translate(1470,320) scale(.33333)" shape-rendering="crispEdges">
<path d="M45,210C50,160 80,100 120,70C160,48 195,40 225,42C280,50 340,90 385,140C410,170 440,215 470,235C485,205 510,175 560,165C610,165 660,190 700,225C730,255 745,290 742,325C725,360 680,400 630,440C585,465 530,482 480,480C430,470 370,435 320,390C280,350 240,310 210,265C190,280 160,292 135,288C100,280 65,260 50,240Z" fill="#000"/>
<path d="M130,80C190,50 270,70 340,125C385,165 425,220 470,262C505,300 555,345 610,362L690,378C650,420 590,455 500,470C430,455 360,405 300,345C250,290 210,230 180,180C155,145 140,110 130,80Z" fill="url(#md)"/>
<path d="M215,90C270,110 320,150 350,190L300,190L250,170Z" fill="url(#md2)"/>
<path d="M430,420C470,350 490,310 500,280L590,360L680,380C640,420 580,450 500,465Z" fill="url(#md2)"/>
<path d="M530,290C540,230 560,195 600,185C650,195 700,235 725,285C730,320 715,345 680,360C620,350 560,330 530,290Z" fill="url(#md3)"/>
<path d="M630,345C610,290 650,245 705,265C730,300 725,345 680,358Z" fill="url(#md4)"/>
<path d="M60,225L110,215L110,275L70,250Z" fill="url(#md3)"/>
<rect x="470" y="245" width="4" height="4" fill="#cfffff"/>
</g>

<!-- PARAVIEW -->
<rect x="77" y="236" width="750" height="14" fill="#000" opacity=".04"/>
<g style="filter:drop-shadow(0 3px 10px rgba(0,0,0,.45))">
<path d="M26,250H1025a12,12 0 0 1 12,12V1050H14V262a12,12 0 0 1 12,-12Z" fill="#ebebeb"/>
</g>
<rect x="14" y="286" width="1023" height="764" fill="#eeeeee"/>
<path d="M14,286.500H1037" stroke="#c8c8c8"/>
<text x="458" y="273" textLength="134" lengthAdjust="spacingAndGlyphs" style="font-size:14px;font-weight:700;fill:#3c3c3c">ParaView 5.13.2</text>
<circle cx="1019" cy="268" r="10.500" fill="#dadada"/><text x="1015.500" y="273" style="font-size:13px;fill:#333">x</text>
<text class="m" x="24" y="300.500" textLength="20">File</text><text class="m" x="59" y="300.500" textLength="23">Edit</text><text class="m" x="97" y="300.500" textLength="28">View</text><text class="m" x="141" y="300.500" textLength="46">Sources</text><text class="m" x="203" y="300.500" textLength="34">Filters</text><text class="m" x="253" y="300.500" textLength="60">Extractors</text><text class="m" x="327" y="300.500" textLength="31">Tools</text><text class="m" x="373" y="300.500" textLength="48">Catalyst</text><text class="m" x="436" y="300.500" textLength="42">Macros</text><text class="m" x="494" y="300.500" textLength="26">Help</text>
<path d="M24,302h6M59,302h7M97,302h8M141,302h7M217,302h4M262,302h6M327,302h7M373,302h8M436,302h9M494,302h8" stroke="#222" stroke-width=".9"/>
<rect x="14" y="307" width="1023" height="115" fill="url(#tb)"/>
<path d="M14,306.500H1037M14,345.500H1037M14,384.500H1037M14,422.500H1037" stroke="#cdcdcd"/>
<path class="grip" d="M20,317V336M23,317V336M470,317V336M473,317V336M713,317V336M716,317V336M923,317V336M926,317V336M20,356V376M23,356V376M495,356V376M498,356V376M662,356V376M665,356V376M917,356V376M920,356V376M977,356V376M980,356V376M1027,356V376M1030,356V376M20,394V414M23,394V414M399,394V414M402,394V414M679,394V414M682,394V414"/>
<path class="sep" d="M191.500,316V336M293.500,316V336M363.500,316V336"/>
<!-- toolbar 1 -->
<use href="#fUp" x="43" y="326"/><use href="#fDn" x="75" y="326"/><use href="#sv" x="107" y="326"/><use href="#rc" x="139" y="326"/><use href="#flask" x="171" y="326"/><use href="#srvC" x="209" y="326"/><use href="#srvX" x="241" y="326"/><use href="#clk" x="273" y="326"/><use href="#und" x="311" y="326"/><use href="#red" x="343" y="326"/><use href="#cba" x="381" y="326"/><use href="#cmp" x="413" y="326"/><use href="#pal" x="445" y="326"/><path d="M453,335h5l-2.500,3z" fill="#666"/>
<use href="#v1" x="494" y="326"/><use href="#v2" x="527" y="326"/><use href="#v3" x="557" y="326"/><use href="#v4" x="592" y="326"/><use href="#v5" x="622" y="326"/><use href="#v6" x="653" y="326"/><use href="#lp" x="686" y="326"/>
<text class="m" x="719" y="330.500" textLength="33">Time:</text>
<rect x="755.500" y="315.500" width="94" height="22" rx="3" class="cb"/><rect x="758" y="318" width="71" height="17" rx="2" fill="#fff" stroke="#b4b4b4"/><text class="m" x="760" y="330.500">0</text><path d="M834,325h8l-4,4z" fill="#666"/>
<rect x="852.500" y="315.500" width="60" height="22" rx="3" fill="#fff" stroke="#b4b4b4"/><text class="m" x="857" y="330.500">0</text><path d="M899,316V337" stroke="#ccc"/><path d="M902,325l4,-5 4,5zM902,328l4,5 4,-5z" fill="#777"/>
<use href="#camS" x="945" y="326"/><use href="#camP" x="977" y="326"/>
<!-- toolbar 2 -->
<rect x="27.500" y="350.500" width="31" height="31" rx="2" fill="#dcdcdc" stroke="#b0b0b0"/>
<use href="#cbar" x="43" y="365"/><use href="#ball" x="74" y="365"/><use href="#chain" x="107" y="365"/><use href="#ar" x="139" y="365"/><use href="#arC" x="171" y="365"/><use href="#arT" x="203" y="365"/><use href="#arE" x="235" y="365"/>
<rect x="251.500" y="353.500" width="149" height="23.500" rx="3" class="cb"/><rect x="262" y="363" width="4" height="4" fill="#f0b020"/><text class="m" x="276" y="369.500">Gradient</text><path d="M386,363h8l-4,4z" fill="#666"/>
<rect x="405.500" y="353.500" width="78" height="23.500" rx="3" class="cb"/><text class="m" x="410" y="369.500" textLength="56" lengthAdjust="spacing">Magnituc</text><path d="M469,363h8l-4,4z" fill="#666"/>
<rect x="501.500" y="354.500" width="149" height="22.500" rx="3" class="cb"/><text class="m" x="506" y="369.500">Surface</text><path d="M636,363h8l-4,4z" fill="#666"/>
<use href="#xp" x="684" y="365"/><use href="#xpI" x="716" y="365"/><use href="#xc" x="748" y="365"/><use href="#xb" x="780" y="365"/><use href="#xm" x="812" y="365"/><use href="#pX" x="843" y="365"/><text x="834" y="362" style="font-size:9px;fill:#555">+X</text><use href="#mX" x="876" y="365"/><text x="877" y="362" style="font-size:9px;fill:#555">-X</text><text class="m" x="897" y="369">»</text>
<rect x="923.500" y="350.500" width="31" height="30" rx="2" fill="#dcdcdc" stroke="#b0b0b0"/><use href="#axisV" x="939" y="365"/><text class="m" x="958" y="369">»</text>
<rect x="984.500" y="350.500" width="31" height="30" rx="2" fill="#dcdcdc" stroke="#b0b0b0"/><use href="#bulb" x="1000" y="367"/>
<!-- toolbar 3 -->
<use href="#calc" x="43" y="404"/><use href="#cubG" x="76" y="404"/><use href="#dis" x="109" y="404"/><use href="#cubW" x="142" y="404"/><use href="#cir" x="175" y="404"/><use href="#cubGy" x="208" y="404"/><use href="#orb" x="241" y="404"/><use href="#cel" x="274" y="404"/><use href="#str" x="304" y="404"/><use href="#cbG" x="340" y="404"/><use href="#ext" x="373" y="404"/><use href="#pl1" x="422" y="404"/><use href="#pl2" x="455" y="404"/><use href="#hist" x="487" y="404"/><use href="#tg" x="520" y="404"/><use href="#plo" x="553" y="404"/><use href="#tg2" x="587" y="404"/><use href="#cry" x="619" y="404"/><use href="#brc" x="653" y="404"/><use href="#rul" x="702" y="404"/><use href="#pro" x="735" y="404"/>

<!-- pipeline browser -->
<text class="m" x="18" y="437.500" textLength="99">Pipeline Browser</text>
<g fill="none" stroke="#888"><rect x="327" y="429" width="10" height="9" rx="2"/><rect x="330" y="431" width="4" height="4"/><rect x="341" y="429" width="10" height="9" rx="2"/><path d="M343,431l6,5M349,431l-6,5"/></g>
<rect x="14.500" y="443.500" width="338" height="203.500" fill="#fff" stroke="#b8b8b8"/>
<path d="M50,445V492" stroke="#aaa"/>
<rect x="46" y="449" width="8" height="15" fill="#fff" stroke="#333"/><rect x="47.500" y="451" width="5" height="2" fill="#333"/><rect x="47" y="455" width="6" height="8" fill="#777"/>
<text class="m" x="61" y="461">builtin:</text>
<use href="#cube" x="50" y="478"/><text class="m" x="61" y="483" textLength="99">case_t0001.pvtu</text>
<use href="#eyeO" x="26" y="479"/>
<rect x="41" y="492" width="84" height="17.500" fill="#308cc6"/><use href="#cube" x="50" y="500"/><text class="m" x="61" y="504.500" textLength="58" style="fill:#d9ecf8">Gradient1</text>
<use href="#eye" x="26" y="500.500"/>
<path d="M177,649h16" stroke="#aaa" stroke-dasharray="1 2"/>
<!-- tabs -->
<path d="M14.500,678V653.500H99V678" fill="#f1f1f1" stroke="#bcbcbc"/><path d="M99.500,678V655.500H192.500V678" fill="#dddddd" stroke="#bcbcbc"/><path d="M99,678H352" stroke="#bcbcbc"/>
<text class="m" x="26" y="671" textLength="60">Properties</text><text class="m" x="111" y="672" textLength="69">Information</text>
<text class="m" x="18" y="694" textLength="60">Properties</text>
<g fill="none" stroke="#888"><rect x="327" y="685" width="10" height="9" rx="2"/><rect x="330" y="687" width="4" height="4"/><rect x="341" y="685" width="10" height="9" rx="2"/><path d="M343,687l6,5M349,687l-6,5"/></g>
<rect x="23.500" y="708.500" width="79" height="23" rx="2" class="btn"/><rect x="105.500" y="708.500" width="79" height="23" rx="2" class="btn"/><rect x="187.500" y="708.500" width="79" height="23" rx="2" class="btn"/><rect x="269.500" y="708.500" width="74" height="23" rx="2" class="btn"/>
<path d="M39,715h8l2,-2v5l-2,-1h-2v7h-6z" fill="#c4c4c4"/><text class="g" x="54" y="724.500">Apply</text>
<circle cx="126" cy="720" r="5.500" fill="none" stroke="#aaa" stroke-width="2.2"/><path d="M122,724l8,-8" stroke="#aaa" stroke-width="2"/><text class="g" x="136" y="724.500">Reset</text>
<path d="M200,716l10,8M210,716l-10,8" stroke="#d01818" stroke-width="3.400"/><text class="m" x="215" y="724.500" style="fill:#222">Delete</text>
<text x="300" y="726" style="font-size:16px;font-weight:700;fill:#9dbd8a">?</text>
<rect x="23.500" y="738.500" width="294" height="22.500" fill="#fff" stroke="#bbb"/><text class="g" x="26" y="754" textLength="191" style="fill:#9a9a9a">Search ... (use Esc to clear text)</text>
<rect x="320.500" y="738.500" width="23" height="22.500" rx="2" class="btn"/><circle cx="332" cy="749.500" r="5.500" fill="#c8c8c8" stroke="#999"/><circle cx="332" cy="749.500" r="2.200" fill="#eee"/>
<!-- scrollbar -->
<rect x="331" y="767" width="13" height="245" fill="#e4e4e4" stroke="#d4d4d4"/><rect x="331" y="767" width="13" height="66" fill="#f6f6f6"/><path d="M334,775l3.500,-3.500 3.500,3.500z" fill="#444"/><path d="M331,780.500h13M331,1000.500h13" stroke="#ccc"/><rect x="331" y="1001" width="13" height="11" fill="#f0f0f0"/><path d="M334,1003l3.500,3.500 3.500,-3.500z" fill="#444"/>
<!-- properties section -->
<rect x="23.500" y="767.500" width="178" height="25.500" fill="url(#bt)" stroke="#bdbdbd"/><rect x="34" y="778" width="14" height="4" fill="#2a8fd0"/>
<text class="b" x="55.500" y="784.500" clip-path="url(#c1)" textLength="138" lengthAdjust="spacingAndGlyphs">Properties (Gradient</text>
<rect x="206.500" y="768.500" width="27" height="24" rx="2" class="btn"/><rect x="238.500" y="768.500" width="27" height="24" rx="2" class="btn"/><rect x="270.500" y="768.500" width="27" height="24" rx="2" class="btn"/><rect x="302.500" y="768.500" width="27" height="24" rx="2" class="btn"/>
<use href="#cp" x="220" y="780.500"/><g opacity=".5"><use href="#cp" x="252" y="780.500"/></g><use href="#rf" x="284" y="780.500"/><use href="#fl" x="316" y="780.500"/>
<text class="m" x="23" y="815" textLength="73">Scalar Array</text>
<rect x="140.500" y="800.500" width="189" height="22" rx="3" class="cb"/><rect x="152" y="809" width="4" height="4" fill="#f0b020"/><text class="m" x="165" y="815.500">potential</text><path d="M315,810h8l-4,4z" fill="#666"/>
<text class="m" x="23" y="842.500" textLength="112">Result Array Name</text>
<rect x="140.500" y="828.500" width="189" height="21" rx="1" fill="#fff" stroke="#bbb"/><text class="m" x="143" y="842.500">Gradient</text>
<rect x="23.500" y="856.500" width="178" height="25" fill="url(#bt)" stroke="#bdbdbd"/><rect x="34" y="867" width="14" height="4" fill="#2a8fd0"/>
<text class="b" x="55.500" y="873.500" clip-path="url(#c2)" textLength="140" lengthAdjust="spacingAndGlyphs">Display (Unstructure</text>
<rect x="206.500" y="857.500" width="27" height="24" rx="2" class="btn"/><rect x="238.500" y="857.500" width="27" height="24" rx="2" class="btn"/><rect x="270.500" y="857.500" width="27" height="24" rx="2" class="btn"/><rect x="302.500" y="857.500" width="27" height="24" rx="2" class="btn"/>
<use href="#cp" x="220" y="869.500"/><g opacity=".5"><use href="#cp" x="252" y="869.500"/></g><use href="#rf" x="284" y="869.500"/><use href="#fl" x="316" y="869.500"/>
<text class="m" x="23" y="904.500" textLength="90.500">Representation</text>
<rect x="119.500" y="889.500" width="210" height="21.500" rx="3" class="cb"/><text class="m" x="124" y="904.500">Surface</text><path d="M315,899h8l-4,4z" fill="#666"/>
<text class="b" x="23" y="931" textLength="56">Coloring</text><path d="M23,934.500H330" stroke="#bdbdbd"/>
<rect x="23.500" y="942.500" width="149" height="23" rx="3" class="cb"/><rect x="35" y="952" width="4" height="4" fill="#f0b020"/><text class="m" x="48" y="958">Gradient</text><path d="M158,952h8l-4,4z" fill="#666"/>
<rect x="177.500" y="942.500" width="120" height="22" rx="3" class="cb"/><text class="m" x="182" y="957" textLength="63">Magnitude</text><path d="M282,952h8l-4,4z" fill="#666"/>
<rect x="23.500" y="969.500" width="82" height="24" rx="2" class="btn"/><g transform="translate(50,981.500) scale(.65)"><use href="#ball"/></g><text class="m" x="60" y="986" textLength="23">Edit</text>
<rect x="110.500" y="969.500" width="27" height="24" rx="2" class="btn"/><g transform="translate(124,981) scale(.65)"><use href="#chain"/></g>
<rect x="142.500" y="969.500" width="27" height="24" rx="2" class="btn"/><g transform="translate(156,981) scale(.7)"><use href="#ar"/></g>
<rect x="174.500" y="969.500" width="27" height="24" rx="2" class="btn"/><g transform="translate(188,981) scale(.7)"><use href="#arC"/></g>
<rect x="206.500" y="969.500" width="27" height="24" rx="2" class="btn"/><g transform="translate(220,981) scale(.7)"><use href="#arT"/></g>
<rect x="238.500" y="969.500" width="27" height="24" rx="2" class="btn"/><path d="M245,975h8l2,2h5v10h-15z" fill="#f5df88" stroke="#a88f4a"/><path d="M252,989c-5,-3 -6,-6 -4,-8 2,-1 3,0 4,1 1,-1 2,-2 4,-1 2,2 1,5 -4,8z" fill="#e03a3a"/>
<rect x="270.500" y="969.500" width="27" height="24" rx="2" fill="#dcdcdc" stroke="#b0b0b0"/><g transform="translate(284,981.500) scale(.7)"><use href="#cbar"/></g>
<rect x="302.500" y="969.500" width="27" height="24" rx="2" class="btn"/><rect x="311" y="973" width="9" height="10" fill="url(#rb)"/><text x="313" y="990" style="font-size:14px;font-weight:700;font-style:italic;fill:#111">e</text>
<text class="b" x="23" y="1012.500" textLength="46">Styling</text>
<rect x="14" y="1012" width="331" height="38" fill="#eeeeee"/>
<!-- layout tab -->
<path d="M361,451V424.500H481V451" fill="#f8f8f8" stroke="#c4c4c4"/><path d="M482,451V426.500H515V451" fill="#ececec" stroke="#c4c4c4"/>
<path d="M361,450.500H1037" stroke="#bfbfbf"/>
<rect x="371.500" y="431.500" width="14" height="14" fill="#fff" stroke="#333" stroke-width="1.400"/><path d="M371,434H386" stroke="#333" stroke-width="3"/>
<text class="m" x="391" y="443" textLength="62">Layout #1</text>
<rect x="458" y="434" width="10" height="10" rx="2" fill="none" stroke="#777"/><path d="M460,436l6,6M466,436l-6,6" stroke="#555"/>
<text x="494" y="445" style="font-size:14px;fill:#333">+</text>
<!-- view toolbar -->
<rect x="361" y="451" width="676" height="27" fill="#efefef"/>
<use href="#ccam" x="372" y="463"/><path d="M367,471a5,5 0 0 1 8,-3v-2l3,4h-4l1,-1a3,3 0 0 0 -6,1z" fill="#e02020"/>
<g opacity=".5"><use href="#ccam" x="400" y="463"/></g>
<rect x="424" y="457" width="19" height="15" fill="none" stroke="#aaa" stroke-dasharray="2 2"/><use href="#ccam" x="434" y="465"/>
<path class="sep" d="M416.500,456V472M449.500,456V472M506.500,456V472M590.500,456V472"/>
<text x="457" y="469" textLength="15" lengthAdjust="spacingAndGlyphs" style="font-size:11px;font-weight:700;fill:#6a6a50">3D</text>
<use href="#ccam" x="488" y="463"/><path d="M490,464l6,7" stroke="#d8a82a" stroke-width="2.400"/>
<use href="#sel" x="522" y="464"/><path d="M518,464h8M522,460v8" stroke="#6fb35a" stroke-width="3"/>
<use href="#sel" x="548" y="464"/><path d="M544,464h8" stroke="#e02020" stroke-width="3"/>
<use href="#sel" x="573" y="464"/><path d="M569,462h7M572.500,459v6" stroke="#6fb35a" stroke-width="2"/><path d="M569,467h7" stroke="#e02020" stroke-width="2"/>
<use href="#sel" x="606" y="464"/><path d="M600,469l6,-9 6,9z" fill="#8ebc74"/>
<use href="#sel" x="632" y="464"/><path d="M626,469l6,-9 6,9z" fill="none" stroke="#aaa"/><circle cx="626" cy="469" r="1.300" fill="#c33"/><circle cx="638" cy="469" r="1.300" fill="#c33"/><circle cx="632" cy="460" r="1.300" fill="#c33"/>
<g transform="translate(658,463) scale(.75)"><path d="M-9,-3L0,-9L10,-6V4L0,8L-9,5Z" fill="#8ebc74" stroke="#5f8a4c"/></g>
<use href="#sel" x="685" y="464"/><circle cx="681" cy="460" r="1.200" fill="#c33"/><circle cx="689" cy="462" r="1.200" fill="#c33"/><circle cx="683" cy="467" r="1.200" fill="#c33"/><circle cx="688" cy="468" r="1.200" fill="#c33"/>
<use href="#sel" x="709" y="464"/><path d="M703,464l7,-5v10z" fill="#a9d09a"/>
<g fill="#b5483c"><circle cx="730" cy="460" r="1.500"/><circle cx="736" cy="459" r="1.500"/><circle cx="733" cy="464" r="1.500"/><circle cx="740" cy="463" r="1.500"/><circle cx="737" cy="468" r="1.500"/><circle cx="731" cy="468" r="1.500"/></g>
<circle cx="757" cy="461" r="2" fill="#2a8fd0"/><circle cx="757" cy="469" r="2" fill="#2a8fd0"/><circle cx="765" cy="465" r="3.500" fill="#a9d09a" stroke="#555"/><path d="M767,468l3,3" stroke="#555" stroke-width="1.600"/>
<g transform="translate(788,463) scale(.75)"><path d="M-9,-3L0,-9L10,-6V4L0,8L-9,5Z" fill="#8ebc74" stroke="#5f8a4c" stroke-dasharray="2 1"/></g>
<text class="m" x="820" y="468">»</text>
<text class="b" x="828" y="469" textLength="88" text-decoration="underline">RenderView1</text>
<rect x="928.500" y="452.500" width="25" height="24" rx="2" class="btn"/><rect x="934" y="458" width="14" height="14" fill="#c4d6ea" stroke="#666"/><path d="M941,458v14" stroke="#666"/>
<rect x="955.500" y="452.500" width="25" height="24" rx="2" class="btn"/><rect x="961" y="458" width="14" height="14" fill="#c4d6ea" stroke="#666"/><path d="M961,465h14" stroke="#666"/>
<rect x="983.500" y="452.500" width="25" height="24" rx="2" class="btn"/><rect x="988.500" y="457.500" width="15" height="15" fill="#fff" stroke="#222" stroke-width="1.400"/><path d="M988,460h16" stroke="#222" stroke-width="3"/>
<rect x="1010" y="452.500" width="25" height="24" rx="2" class="btn"/><rect x="1017" y="460" width="10" height="10" rx="2" fill="none" stroke="#777"/><path d="M1019,462l6,6M1025,462l-6,6" stroke="#333"/>
<!-- render view -->
<rect x="362" y="479" width="672" height="538" fill="#52576e" stroke="#0000f0" stroke-width="2"/>
<g transform="translate(360,420) scale(.43365,.41459)">
<g clip-path="url(#tube)"><rect x="150" y="540" width="1150" height="480" fill="url(#lobeL)"/><rect x="150" y="540" width="1150" height="480" fill="url(#lobeR)" mask="url(#rm)"/></g>
<path d="M197,770C200,750 240,755 300,800C370,850 420,900 407,922C395,935 330,905 270,870C220,835 195,800 197,770Z" fill="url(#mouth)" stroke="#3e4258" stroke-width="4"/>
</g>
<!-- legend -->
<rect x="916" y="829" width="16" height="176" fill="url(#legend)"/>
<path d="M932,829.500h9M932,867.500h9M932,913.500h9M932,958.500h9M932,1005h9" stroke="#fff" stroke-width="1.400"/>
<text class="leg" x="947" y="833" textLength="59" lengthAdjust="spacingAndGlyphs">1.6e+00</text>
<text class="leg" x="947" y="871">1.4</text><text class="leg" x="947" y="916.500">1.2</text><text class="leg" x="948" y="962">1</text>
<text class="leg" x="946" y="1009" textLength="53" lengthAdjust="spacingAndGlyphs">7.9e-01</text>
<text class="leg" transform="translate(1023,994) rotate(-90)" textLength="158" lengthAdjust="spacingAndGlyphs">Gradient Magnitude</text>
<!-- axes -->
<path d="M430,949L405,926" stroke="#d8d000"/><path d="M430,949L417,953.500" stroke="#20d020"/><path d="M430,949L413,977" stroke="#c02020"/>
<path d="M403,925l6,1-3,4z" fill="#f0e000"/><circle cx="417" cy="953.500" r="2.200" fill="#20e020"/><path d="M412,978l2,-7 4,3z" fill="#f01010"/>
<text x="409" y="930" style="font-size:9px;fill:#e8e8e8">Y</text><text x="418" y="953" style="font-size:9px;fill:#e8e8e8">Z</text><text x="418" y="973" style="font-size:9px;fill:#f5f5f5">X</text>
<!-- status bar -->
<rect x="347" y="1024" width="19" height="21" rx="2" class="btn"/><path d="M353,1031l7,7M360,1031l-7,7" stroke="#aaa" stroke-width="2"/>
<rect x="369.500" y="1024.500" width="307" height="22.500" fill="#eeeeee" stroke="#d2d2d2"/>
<rect x="683.500" y="1024.500" width="329" height="22" rx="2" fill="#fff" stroke="#bdbdbd"/><rect x="684" y="1025" width="10" height="21" fill="#c8e4c0"/><path d="M694.500,1025v21" stroke="#aaa"/>
<text class="m" x="728" y="1040" textLength="239.500">elmer-VirtualBox: 2.1 GiB/61.4 GiB 3.5%</text>

<!-- TERMINAL -->
<g style="filter:drop-shadow(0 2px 8px rgba(0,0,0,.4))">
<path d="M1126,571H1836a12,12 0 0 1 12,12V1052H1114V583a12,12 0 0 1 12,-12Z" fill="#fafafa" stroke="#bcbcbc" stroke-width=".6"/>
</g>
<rect x="1114" y="617" width="734" height="435" fill="#390c2c"/>
<path d="M1114,617H1848" stroke="#aaa"/>
<rect x="1120.500" y="577.500" width="35" height="33.500" rx="6" fill="#fafafa" stroke="#d4d4d4"/><path d="M1134,603V588h10v15M1135,595h8M1139,591v8" stroke="#555" fill="none"/>
<text class="t" x="1225" y="599" textLength="474" lengthAdjust="spacingAndGlyphs">elmeruser@elmer-VirtualBox: ~/elmer-work/python-speed</text>
<rect x="1718.500" y="577.500" width="34" height="33.500" rx="6" fill="#fafafa" stroke="#d4d4d4"/><circle cx="1734.500" cy="593" r="5.500" fill="none" stroke="#666" stroke-width="1.100"/><path d="M1738,598l3,4" stroke="#666" stroke-width="1.100"/>
<rect x="1760.500" y="577.500" width="35" height="33.500" rx="6" fill="#fafafa" stroke="#d4d4d4"/><path d="M1772,588.500h11M1772,594h11M1772,599.500h11" stroke="#666"/>
<text x="1821" y="599" style="font-size:13px;fill:#444">x</text>
<text class="tm" x="1114.500" y="633">Loading mesh parameters...</text>
<text class="tm" x="1114.500" y="651">Loading solver parameters...</text>
<text class="tm" x="1114.500" y="669">Loading dynamic editor contents...</text>
<text class="tm" x="1114.500" y="687">Loading solver specific options...</text>
<text class="tm" x="1114.500" y="705">Loading body properties...</text>
<text class="tm" x="1114.500" y="723">Loading boundary properties...</text>
<text class="tm" x="1114.500" y="741">case.sif loaded.</text>
<text class="tm" x="1114.500" y="759">Ready</text>
<text class="tm" x="1114.500" y="777">Bcs/materials on surface elements: 3</text>
<text class="tm" x="1114.500" y="795">Bcs/materials on edge elements: 0</text>
<text class="tm" x="1114.500" y="813">Bcs/materials on point elements: 0</text>
<text class="tm" x="1114.500" y="831">Generating  lists to display</text>
<text class="tm" x="1114.500" y="849">Generated 8 lists</text>
<text class="tm" x="1114.500" y="867">Executing: ElmerGrid 2 2 "/home/elmeruser/elmer-work/sample-1/smeca" -partdual -</text>
<text class="tm" x="1114.500" y="885">metiskway 4</text>
<text class="tm" x="1114.500" y="903">MeshSplitter ready</text>
<text class="tm" x="1114.500" y="921">Executing: mpirun -np 4 ElmerSolver_mpi</text>
<text class="tm" x="1114.500" y="939">Solver emitted signal: QProcess::ProcessState: 1</text>
<text class="tm" x="1114.500" y="957">Solver emitted signal: QProcess::ProcessState: 2</text>
<text class="tm" x="1114.500" y="975">Parallel solver started</text>
<text class="tm" x="1114.500" y="993">Solver emitted signal: QProcess::ProcessState: 0</text>
<text class="tm" x="1114.500" y="1011">Solver ready</text>
<text class="tm" x="1114.500" y="1029">ParaView started</text>
<rect x="1114.500" y="1032.500" width="10" height="19" fill="none" stroke="#eee"/>
<rect x="1838" y="1010" width="6" height="40" rx="3" fill="#42163a"/>
</svg>
</body></html>
